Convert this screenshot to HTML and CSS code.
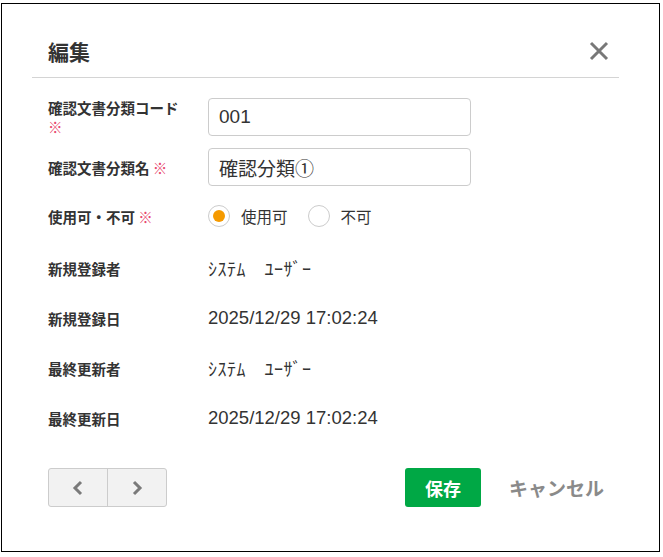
FILE: index.html
```html
<!DOCTYPE html>
<html>
  <head>
    <meta charset="utf-8" />
    <link rel="stylesheet" href="styles.css">
  </head>
  <body>
    <div class="dlg">
      <div class="hd">
        <span class="ttl">編集</span>
        <span class="close"><svg width="20" height="20" viewBox="0 0 20 20"><path d="M2 2L18 18M18 2L2 18" stroke="#787878" stroke-width="3" fill="none"/></svg></span>
      </div>
      <div class="bd">
        <div class="row r-in">
          <label class="lbl">確認文書分類コード <span class="req">※</span></label>
          <input class="txt" type="text" value="001">
        </div>
        <div class="row r-in">
          <label class="lbl">確認文書分類名 <span class="req">※</span></label>
          <input class="txt" type="text" value="確認分類①">
        </div>
        <div class="row r-rad">
          <label class="lbl">使用可・不可 <span class="req">※</span></label>
          <div class="rads">
            <span class="rad on"></span><span class="rt">使用可</span>
            <span class="rad"></span><span class="rt">不可</span>
          </div>
        </div>
        <div class="row r-tx">
          <label class="lbl">新規登録者</label>
          <span class="val kana">ｼｽﾃﾑ　ﾕｰｻﾞｰ</span>
        </div>
        <div class="row r-tx">
          <label class="lbl">新規登録日</label>
          <span class="val">2025/12/29 17:02:24</span>
        </div>
        <div class="row r-tx">
          <label class="lbl">最終更新者</label>
          <span class="val kana">ｼｽﾃﾑ　ﾕｰｻﾞｰ</span>
        </div>
        <div class="row r-tx">
          <label class="lbl">最終更新日</label>
          <span class="val">2025/12/29 17:02:24</span>
        </div>
      </div>
      <div class="ft">
        <div class="nav">
          <a class="nb"><svg width="12" height="16" viewBox="0 0 12 16"><path d="M9 2L3 8L9 14" stroke="#7a7a7a" stroke-width="3" fill="none"/></svg></a>
          <a class="nb"><svg width="12" height="16" viewBox="0 0 12 16"><path d="M3 2L9 8L3 14" stroke="#7a7a7a" stroke-width="3" fill="none"/></svg></a>
        </div>
        <div class="acts">
          <a class="save">保存</a>
          <a class="cancel">キャンセル</a>
        </div>
      </div>
    </div>
  </body>
</html>
```
FILE: styles.css
```css
body { margin: 0; background: #fff; font-family: "Liberation Sans", "Noto Sans CJK JP", sans-serif; color: #333; }
.dlg { margin: 3px 0 0 1px; width: 659px; height: 549px; box-sizing: border-box; border: 1px solid #000; background: #fff; }
.hd { display: flex; align-items: center; justify-content: space-between; height: 74px; box-sizing: border-box; padding: 20px 10px 0 16px; margin: 0 40px 0 30px; border-bottom: 1px solid #d4d4d4; }
.ttl { font-family: "Noto Sans CJK JP", sans-serif; font-size: 21px; font-weight: 700; color: #333; }
.close { display: flex; width: 20px; height: 20px; }
.bd { padding: 20px 0 0 46px; }
.row { display: flex; align-items: center; }
.r-in { height: 38px; margin-bottom: 12px; }
.r-rad { height: 36px; margin-bottom: 14px; }
.r-tx { height: 40px; margin-bottom: 10px; }
.lbl { width: 140px; margin-right: 20px; font-family: "Noto Sans CJK JP", sans-serif; font-size: 14.5px; font-weight: 700; line-height: 19px; color: #333; }
.req { color: #e8456c; font-weight: 400; }
.txt { width: 263px; height: 38px; box-sizing: border-box; border: 1px solid #ccc; border-radius: 4px; padding: 0 10px; font-family: "Liberation Sans", "Noto Sans CJK JP", sans-serif; font-size: 19px; color: #333; outline: none; }
.rads { display: flex; align-items: center; }
.rad { width: 22px; height: 22px; box-sizing: border-box; border: 1px solid #ccc; border-radius: 50%; position: relative; }
.rad.on::after { content: ""; position: absolute; left: 4px; top: 4px; width: 12px; height: 12px; border-radius: 50%; background: #f59a00; }
.rt { font-family: "Noto Sans CJK JP", sans-serif; font-size: 15.5px; color: #333; margin: 0 0 0 11px; }
.rt:nth-child(2) { margin-right: 20px; }
.val { font-size: 18.5px; color: #333; }
.kana { font-family: "Noto Sans CJK JP", sans-serif; font-size: 18px; letter-spacing: 0.5px; }
.ft { display: flex; justify-content: space-between; align-items: center; margin-top: 30px; padding: 0 41px 0 46px; }
.nav { display: flex; border: 1px solid #ccc; border-radius: 3px; background: #f2f2f2; height: 39px; box-sizing: border-box; }
.nb { display: flex; align-items: center; justify-content: center; width: 58px; }
.nb + .nb { border-left: 1px solid #ccc; }
.acts { display: flex; align-items: center; }
.save { display: flex; align-items: center; justify-content: center; width: 76px; height: 39px; background: #00a845; border-radius: 3px; color: #fff; font-family: "Noto Sans CJK JP", sans-serif; font-size: 18px; font-weight: 700; }
.cancel { margin-left: 14px; padding: 0 14px; font-family: "Noto Sans CJK JP", sans-serif; font-size: 19px; font-weight: 700; color: #8a8a8a; }
```
